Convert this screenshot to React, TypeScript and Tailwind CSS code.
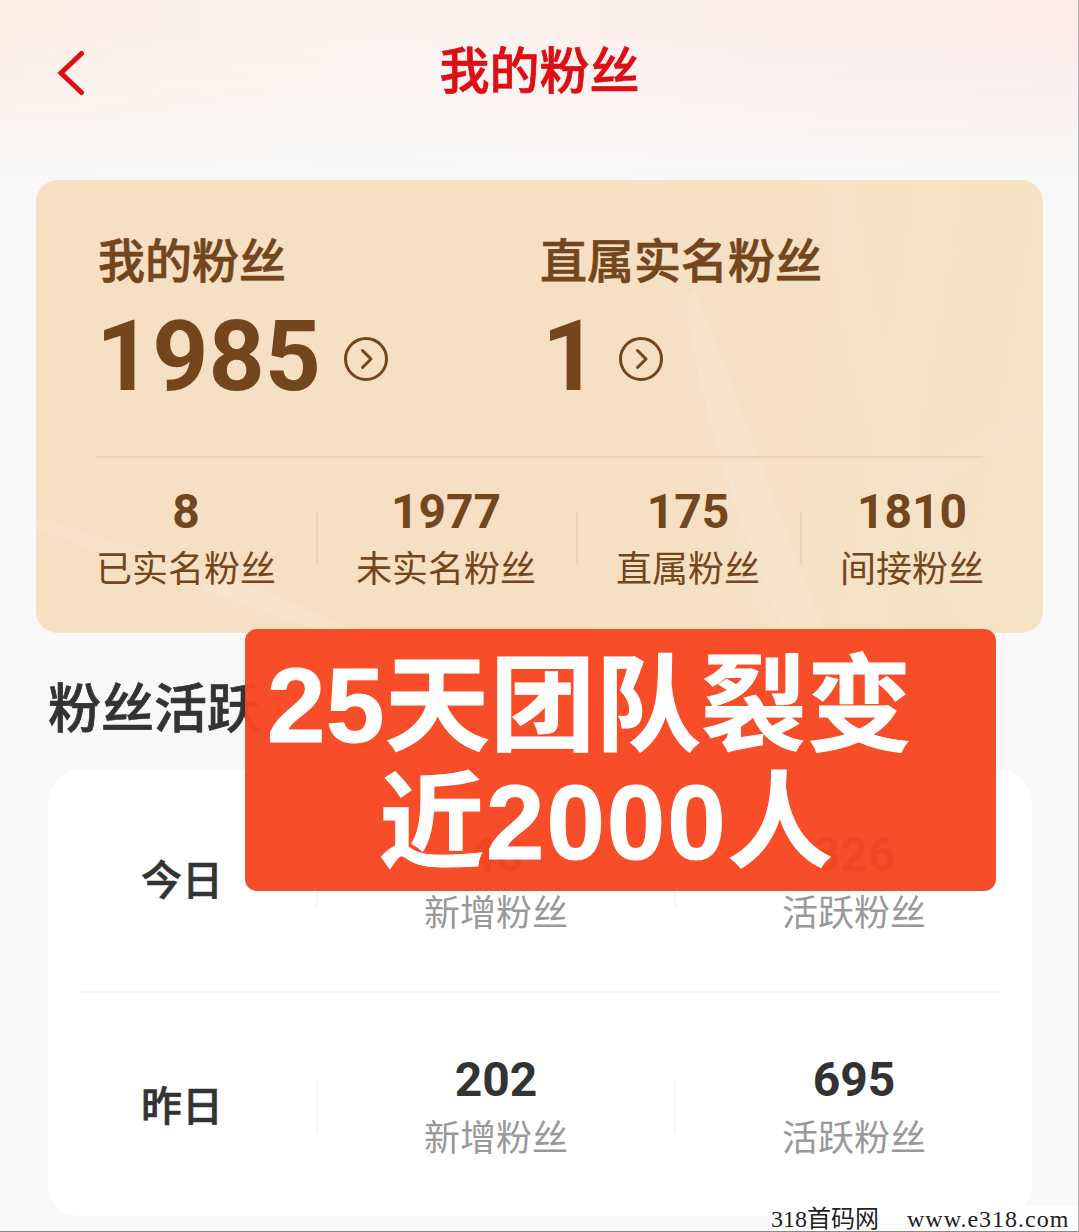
const cjk = "font-['Roboto','Noto_Sans_CJK_SC',sans-serif]";

const summary = [
  { value: "8", label: "已实名粉丝" },
  { value: "1977", label: "未实名粉丝" },
  { value: "175", label: "直属粉丝" },
  { value: "1810", label: "间接粉丝" },
];

const activity = [
  { day: "今日", added: "48", active: "326" },
  { day: "昨日", added: "202", active: "695" },
];

function BackArrow() {
  return (
    <svg viewBox="0 0 30 46" className="absolute left-[56px] top-[50px] h-[46px] w-[30px] text-[#dc0f14]" fill="none" stroke="currentColor">
      <path d="M25.500 3.500 5 23l20.500 19.500" strokeWidth="5" strokeLinecap="round" strokeLinejoin="miter" />
    </svg>
  );
}

function CircleArrow() {
  return (
    <svg viewBox="0 0 44 44" className="mt-[4px] h-[44px] w-[44px] text-[#74461d]" fill="none" stroke="currentColor">
      <circle cx="22" cy="22" r="20.500" strokeWidth="3" />
      <path d="M18.500 13.500 27 22l-8.500 8.500" strokeWidth="3" strokeLinecap="round" strokeLinejoin="round" />
    </svg>
  );
}

function CardStreaks() {
  return (
    <svg viewBox="0 0 1008 453" className="absolute inset-0 h-full w-full" fill="none" preserveAspectRatio="none">
      <path d="M650 120C665 220 700 340 750 453L790 453C745 340 700 210 660 110Z" fill="#ffffff" fillOpacity="0.1" />
      <path d="M600 0C630 150 670 320 730 453L750 453C700 320 650 150 625 0Z" fill="#ffffff" fillOpacity="0.05" />
      <path d="M790 0C800 160 850 340 940 453L990 453C890 330 830 160 820 0Z" fill="#ffffff" fillOpacity="0.05" />
      <path d="M0 350C70 375 170 410 290 453L330 453C220 405 100 365 0 338Z" fill="#ffffff" fillOpacity="0.1" />
      <path d="M165 410C180 395 215 390 245 410L300 453L180 453Z" fill="#ffffff" fillOpacity="0.08" />
      <path d="M1008 230C940 250 880 290 840 340L850 350C890 305 950 265 1008 250Z" fill="#ffffff" fillOpacity="0.06" />
    </svg>
  );
}

export default function App() {
  return (
    <div className={`relative h-[1232px] w-[1079px] overflow-hidden bg-[#f8f8f8] ${cjk}`}>
      <div className="absolute inset-x-0 top-0 h-[180px] bg-[linear-gradient(100deg,#fdeee4_0%,#fbf3f0_35%,#fdeaea_100%)] [mask-image:linear-gradient(to_bottom,black_20%,transparent_100%)]" />

      <div className="relative">
        <header className="relative flex h-[144px] items-center justify-center">
          <BackArrow />
          <h1 className="text-[50px] font-medium leading-none text-[#dc0f14] [-webkit-text-stroke:0.7px_#dc0f14]">我的粉丝</h1>
        </header>

        <section className="relative mx-[36px] mt-[36px] h-[453px] overflow-hidden rounded-[22px] bg-[linear-gradient(100deg,#f6dfc3_0%,#f6dfc3_55%,#f5e3c6_100%)] px-[60px] pt-[55px] text-[#74461d]">
          <CardStreaks />
          <div className="relative">
            <div className="flex">
              <div className="w-[444px]">
                <p className="pl-[2px] text-[47px] font-medium leading-[54px] [-webkit-text-stroke:0.7px_#74461d]">我的粉丝</p>
                <div className="mt-[21px] flex h-[94px] items-center gap-[23px]">
                  <span className="text-[98px] font-bold leading-none">1985</span>
                  <CircleArrow />
                </div>
              </div>
              <div>
                <p className="text-[47px] font-medium leading-[54px] [-webkit-text-stroke:0.7px_#74461d]">直属实名粉丝</p>
                <div className="mt-[21px] flex h-[94px] items-center gap-[21px] pl-[2px]">
                  <span className="text-[98px] font-bold leading-none">1</span>
                  <CircleArrow />
                </div>
              </div>
            </div>

            <div className="mt-[52px] border-t-2 border-[#ead2b4]" />

            <div className="mt-[27px] flex">
              {summary.map((item, i) => (
                <div key={item.label} className="flex items-center">
                  {i > 0 && <div className="mb-[8px] mr-[38px] h-[52px] w-[2px] bg-[#ead2b4]" />}
                  <div className={i < summary.length - 1 ? "mr-[40px] text-center" : "text-center"}>
                    <p className="text-[48px] font-bold leading-[54px]">{item.value}</p>
                    <p className="mt-[2px] whitespace-nowrap text-[36px] leading-[58px]">{item.label}</p>
                  </div>
                </div>
              ))}
            </div>
          </div>
        </section>

        <h2 className="ml-[48px] mt-[46px] text-[53px] font-medium leading-[62px] text-[#333333] [-webkit-text-stroke:0.7px_#333333]">粉丝活跃</h2>

        <section className="ml-[48px] mr-[47px] mt-[29px] h-[446px] rounded-[32px] bg-white">
          {activity.map((row, i) => (
            <div
              key={row.day}
              className={`relative grid h-[223px] grid-cols-[268px_358px_358px] items-center ${i === 0 ? "after:absolute after:bottom-0 after:left-[30px] after:right-[30px] after:h-[2px] after:bg-[#f6f6f6]" : "pt-[5px]"}`}
            >
              <p className="text-center text-[41px] font-medium leading-none text-[#333333] [-webkit-text-stroke:0.6px_#333333]">{row.day}</p>
              {[
                { value: row.added, label: "新增粉丝" },
                { value: row.active, label: "活跃粉丝" },
              ].map((cell) => (
                <div key={cell.label} className="flex h-[106px] items-stretch">
                  <div className="h-[52px] w-[2px] self-center bg-[#f6f6f6]" />
                  <div className="flex-1 text-center">
                    <p className="mt-[-1px] text-[48px] font-bold leading-[54px] text-[#333333]">{cell.value}</p>
                    <p className="mt-[3px] whitespace-nowrap text-[36px] leading-[58px] text-[#999999]">{cell.label}</p>
                  </div>
                </div>
              ))}
            </div>
          ))}
        </section>
      </div>

      <div className="absolute left-[245px] top-[629px] h-[262px] w-[751px] rounded-[12px] bg-[#f84722]/[.97] pt-[18px] font-['Liberation_Sans','Noto_Sans_CJK_SC',sans-serif] text-[105px] font-bold leading-[117px] text-white [-webkit-text-stroke:1px_white]">
        <p className="whitespace-nowrap pl-[22px] tracking-[0.5px]">25天团队裂变</p>
        <p className="whitespace-nowrap pl-[134px] tracking-[2px]">近2000人</p>
      </div>

      <div className="absolute bottom-[1px] right-[1px] flex h-[25px] w-[310px] items-center whitespace-nowrap bg-white/90 pl-[3px] font-['Liberation_Serif','Noto_Sans_CJK_SC',serif] text-[24px] leading-none text-[#222222]">
        <span>318首码网</span>
        <span className="ml-[28px] tracking-[1px]">www.e318.com</span>
      </div>

      <div className="absolute inset-x-0 bottom-0 h-[1px] bg-[#8a8a8a]" />
      <div className="absolute inset-y-0 right-0 w-[1px] bg-[#b5b5b5]" />
    </div>
  );
}
